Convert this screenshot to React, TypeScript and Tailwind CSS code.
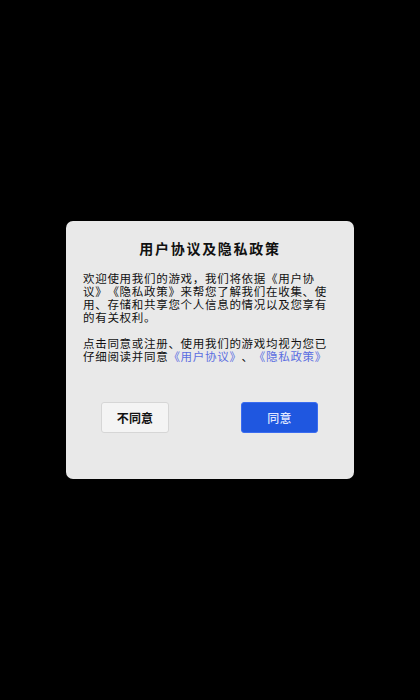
import React from "react";

export default function App() {
  const font = { fontFamily: '"Noto Sans CJK SC", "Noto Sans", sans-serif' };
  return (
    <div
      className="flex h-[700px] w-[420px] items-center justify-center bg-black [text-spacing-trim:space-all]"
      style={font}
    >
      <div className="flex h-[258px] w-[288px] flex-col rounded-[7px] bg-[#e9e9e9] pt-[19px]">
        <div className="text-center text-[14px] font-bold leading-[16px] tracking-[1.7px] text-[#111]">
          用户协议及隐私政策
        </div>
        <div className="mt-[16px] pl-[17px] pr-[21px] text-[11.5px] leading-[13px] tracking-[0.7px] text-[#111]">
          <p>
            欢迎使用我们的游戏，我们将依据《用户协议》《隐私政策》来帮您了解我们在收集、使用、存储和共享您个人信息的情况以及您享有的有关权利。
          </p>
          <p className="mt-[13px]">
            <span>点击同意或注册、使用我们的游戏均视为您已仔细阅读并同意</span>
            <span className="text-[#5b6ee1]">《用户协议》</span>
            <span>、</span>
            <span className="text-[#5b6ee1]">《隐私政策》</span>
          </p>
        </div>
        <div className="mt-[39px] flex justify-between pl-[35px] pr-[36px]">
          <div className="flex h-[31px] w-[68px] items-center justify-center rounded-[3px] border border-[#d6d6d6] bg-[#f4f4f4] text-[12px] font-bold tracking-[0.2px] text-[#111]">
            不同意
          </div>
          <div className="flex h-[31px] w-[77px] items-center justify-center rounded-[3px] border border-[#3a6cf0] bg-[#1f57e0] text-[12px] font-medium tracking-[0.3px] text-[#dfe6ff]">
            同意
          </div>
        </div>
      </div>
    </div>
  );
}
